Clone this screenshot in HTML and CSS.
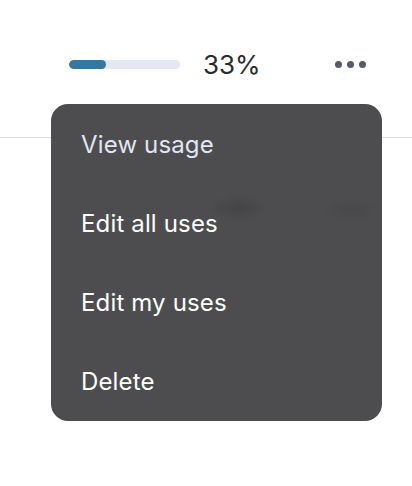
FILE: index.html
```html
<!DOCTYPE html>
<html>
<head>
<meta charset="utf-8">
<link rel="stylesheet" href="styles.css">
</head>
<body>
<div class="page">
  <div class="toprow">
    <div class="progress"><div class="fill" style="width:33%"></div></div>
    <span class="pct">33%</span>
    <button class="more" aria-label="More">
      <span class="dot"></span><span class="dot"></span><span class="dot"></span>
    </button>
  </div>
  <div class="divider"></div>
  <div class="menu">
    <div class="item muted">View usage</div>
    <div class="item">Edit all uses</div>
    <div class="item">Edit my uses</div>
    <div class="item">Delete</div>
  </div>
</div>
</body>
</html>
```
FILE: styles.css
```css
html, body {
  margin: 0;
  padding: 0;
  background: #ffffff;
  font-family: Inter, "Liberation Sans", Arial, sans-serif;
}
.page {
  position: relative;
  width: 412px;
  height: 486px;
  overflow: hidden;
}
.toprow {
  display: flex;
  align-items: center;
  height: 40px;
  margin-top: 44px;
  padding-left: 69px;
}
.progress {
  width: 111px;
  height: 9px;
  border-radius: 5px;
  background: #e4e8f2;
  overflow: hidden;
}
.fill {
  height: 100%;
  background: #35779e;
  border-radius: 5px;
}
.pct {
  margin-left: 23px;
  font-size: 26px;
  color: #2b2b2e;
}
.more {
  margin-left: auto;
  margin-right: 46px;
  display: flex;
  gap: 5px;
  padding: 0;
  border: 0;
  background: none;
}
.dot {
  width: 7px;
  height: 7px;
  border-radius: 50%;
  background: #555a63;
}
.divider {
  margin-top: 53px;
  height: 1px;
  background: #dcdde8;
}
.menu {
  position: absolute;
  left: 51px;
  top: 104px;
  width: 331px;
  padding-top: 1px;
  box-sizing: border-box;
  height: 317px;
  border-radius: 17px;
  background-color: #4d4d4f;
  background-image:
    radial-gradient(ellipse 30px 14px at 187px 104px, rgba(62,62,64,0.55), rgba(77,77,79,0)),
    radial-gradient(ellipse 30px 12px at 299px 106px, rgba(66,66,68,0.4), rgba(77,77,79,0));
}
.item {
  height: 79px;
  display: flex;
  align-items: center;
  padding-left: 30px;
  font-size: 24px;
  letter-spacing: 0.15px;
  color: #ffffff;
}
.item.muted {
  color: #e2e5f3;
}
```
